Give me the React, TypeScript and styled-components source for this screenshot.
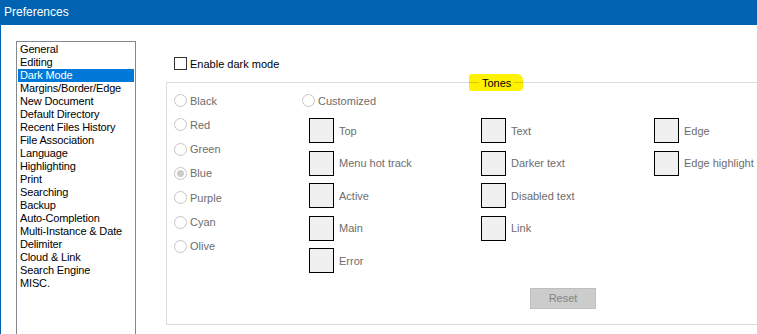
import React from "react";
import styled, { createGlobalStyle } from "styled-components";

const GlobalStyle = createGlobalStyle`
  html, body { margin: 0; padding: 0; background: #ffffff; }
  body { font-family: "Liberation Sans", Arial, sans-serif; font-size: 11px; }
  * { box-sizing: border-box; }
`;

const Window = styled.div`
  width: 757px;
  height: 334px;
  overflow: hidden;
  background: #ffffff;
  border-left: 1px solid #0063b1;
  display: flex;
  flex-direction: column;
`;

const TitleBar = styled.div`
  height: 25px;
  flex: none;
  background: #0063b1;
  color: #ffffff;
  font-size: 12px;
  line-height: 25px;
  padding-left: 4px;
  margin-left: -1px;
`;

const Body = styled.div`
  flex: 1;
  display: flex;
  align-items: flex-start;
  padding-left: 15px;
  gap: 30px;
  overflow: hidden;
`;

const CategoryList = styled.ul`
  list-style: none;
  margin: 16px 0 0 0;
  padding: 1px;
  width: 120px;
  height: 360px;
  flex: none;
  border: 1px solid #828790;
`;

const CategoryItem = styled.li<{ $selected?: boolean }>`
  height: 13px;
  line-height: 13px;
  padding-left: 2px;
  white-space: nowrap;
  letter-spacing: -0.15px;
  color: ${(p) => (p.$selected ? "#ffffff" : "#000000")};
  background: ${(p) => (p.$selected ? "#0078d7" : "transparent")};
`;

const Content = styled.div`
  flex: none;
  width: 620px;
  display: flex;
  flex-direction: column;
`;

const CheckRow = styled.label`
  display: flex;
  align-items: center;
  gap: 3px;
  margin: 32px 0 0 8px;
  height: 13px;
  color: #000000;
`;

const CheckBox = styled.span`
  width: 13px;
  height: 13px;
  border: 1px solid #333333;
  background: #ffffff;
  flex: none;
`;

const GroupBox = styled.fieldset`
  position: relative;
  margin: 12px 0 0 0;
  padding: 11px 0 0 7px;
  height: 243px;
  border: 1px solid #dcdcdc;
  display: flex;
  align-items: flex-start;
  min-width: 0;
`;

const Legend = styled.div`
  position: absolute;
  top: -9px;
  left: 302px;
  width: 54px;
  height: 17px;
  background: #fff200;
  border-radius: 3px 6px 4px 2px;
  display: flex;
  align-items: center;
  &::before {
    content: "";
    position: absolute;
    left: 0;
    right: 0;
    top: 8px;
    height: 1px;
    background: #d2c900;
  }
`;

const LegendText = styled.span`
  position: relative;
  margin-left: 10px;
  padding: 0 3px;
  background: #fff200;
  color: #000000;
`;

const RadioColumn = styled.div<{ $width: number }>`
  width: ${(p) => p.$width}px;
  flex: none;
  display: flex;
  flex-direction: column;
  gap: 11.33px;
`;

const RadioRow = styled.div`
  height: 13px;
  display: flex;
  align-items: center;
  gap: 3px;
  color: #6d6d6d;
`;

const RadioCircle = styled.span<{ $checked?: boolean }>`
  width: 13px;
  height: 13px;
  flex: none;
  border-radius: 50%;
  border: 1px solid #c6c6c6;
  background: #ffffff;
  display: flex;
  align-items: center;
  justify-content: center;
  &::after {
    content: "";
    width: 7px;
    height: 7px;
    border-radius: 50%;
    background: ${(p) => (p.$checked ? "#cccccc" : "transparent")};
  }
`;

const SwatchColumn = styled.div<{ $width: number; $top: number }>`
  width: ${(p) => p.$width}px;
  flex: none;
  display: flex;
  flex-direction: column;
  padding-top: ${(p) => p.$top}px;
`;

const SwatchList = styled.div<{ $indent: number; $gapTop?: number }>`
  display: flex;
  flex-direction: column;
  gap: 7.5px;
  padding-left: ${(p) => p.$indent}px;
  margin-top: ${(p) => p.$gapTop ?? 0}px;
`;

const SwatchRow = styled.div`
  display: flex;
  align-items: center;
  gap: 5px;
  height: 25px;
  color: #6d6d6d;
  white-space: nowrap;
`;

const Swatch = styled.span`
  width: 25px;
  height: 25px;
  flex: none;
  border: 1px solid #000000;
  background: #f0f0f0;
`;

const ResetButton = styled.button`
  margin: 47px 0 0 49px;
  width: 66px;
  height: 21px;
  padding: 0;
  border: 1px solid #bfbfbf;
  background: #cccccc;
  color: #838383;
  font-family: inherit;
  font-size: 11px;
`;

const categories = [
  "General",
  "Editing",
  "Dark Mode",
  "Margins/Border/Edge",
  "New Document",
  "Default Directory",
  "Recent Files History",
  "File Association",
  "Language",
  "Highlighting",
  "Print",
  "Searching",
  "Backup",
  "Auto-Completion",
  "Multi-Instance & Date",
  "Delimiter",
  "Cloud & Link",
  "Search Engine",
  "MISC.",
];

const presets = ["Black", "Red", "Green", "Blue", "Purple", "Cyan", "Olive"];

export default function App() {
  return (
    <>
      <GlobalStyle />
      <Window>
        <TitleBar>Preferences</TitleBar>
        <Body>
          <CategoryList>
            {categories.map((c) => (
              <CategoryItem key={c} $selected={c === "Dark Mode"}>
                {c}
              </CategoryItem>
            ))}
          </CategoryList>
          <Content>
            <CheckRow>
              <CheckBox />
              Enable dark mode
            </CheckRow>
            <GroupBox>
              <Legend>
                <LegendText>Tones</LegendText>
              </Legend>
              <RadioColumn $width={128}>
                {presets.map((p) => (
                  <RadioRow key={p}>
                    <RadioCircle $checked={p === "Blue"} />
                    {p}
                  </RadioRow>
                ))}
              </RadioColumn>
              <SwatchColumn $width={179} $top={0}>
                <RadioRow>
                  <RadioCircle />
                  Customized
                </RadioRow>
                <SwatchList $indent={7} $gapTop={11}>
                  {["Top", "Menu hot track", "Active", "Main", "Error"].map((t) => (
                    <SwatchRow key={t}>
                      <Swatch />
                      {t}
                    </SwatchRow>
                  ))}
                </SwatchList>
              </SwatchColumn>
              <SwatchColumn $width={173} $top={24}>
                <SwatchList $indent={0}>
                  {["Text", "Darker text", "Disabled text", "Link"].map((t) => (
                    <SwatchRow key={t}>
                      <Swatch />
                      {t}
                    </SwatchRow>
                  ))}
                </SwatchList>
                <ResetButton disabled>Reset</ResetButton>
              </SwatchColumn>
              <SwatchColumn $width={120} $top={24}>
                <SwatchList $indent={0}>
                  {["Edge", "Edge highlight"].map((t) => (
                    <SwatchRow key={t}>
                      <Swatch />
                      {t}
                    </SwatchRow>
                  ))}
                </SwatchList>
              </SwatchColumn>
            </GroupBox>
          </Content>
        </Body>
      </Window>
    </>
  );
}
